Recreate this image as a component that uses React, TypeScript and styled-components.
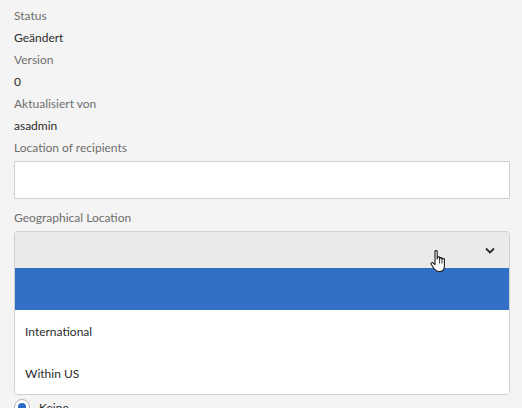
import React from "react";
import styled, { createGlobalStyle } from "styled-components";

const Global = createGlobalStyle`
  html, body { margin: 0; padding: 0; background: #f4f4f4; }
  body { font-family: Lato, "Open Sans", sans-serif; overflow: hidden; }
`;

const Page = styled.div`
  position: relative;
  width: 522px;
  height: 408px;
  overflow: hidden;
  padding: 5px 12px 0 14px;
  box-sizing: border-box;
`;

const Label = styled.div`
  font-size: 12px;
  line-height: 22px;
  color: #6e6e6e;
`;

const Value = styled.div`
  font-size: 12px;
  line-height: 22px;
  color: #2c2c2c;
`;

const FieldLabel = styled(Label)<{ $top?: number }>`
  margin-top: ${(p) => p.$top ?? 0}px;
  margin-bottom: 2px;
`;

const TextInput = styled.div`
  height: 38px;
  box-sizing: border-box;
  background: #fff;
  border: 1px solid #d0d0d0;
`;

const Select = styled.div`
  margin-top: 1px;
  border: 1px solid #d0d0d0;
  border-radius: 4px;
  background: #fff;
  overflow: hidden;
`;

const SelectButton = styled.div`
  height: 36px;
  background: #eaeaea;
  display: flex;
  align-items: center;
  justify-content: flex-end;
  padding-right: 14px;
`;

const Option = styled.div<{ $active?: boolean }>`
  height: 42px;
  display: flex;
  align-items: center;
  padding-left: 10px;
  font-size: 12px;
  color: #2c2c2c;
  background: ${(p) => (p.$active ? "#3270c6" : "#fff")};
`;

const RadioRow = styled.div`
  margin-top: 4px;
  display: flex;
  align-items: center;
  gap: 9px;
  font-size: 12px;
  color: #2c2c2c;
`;

const Radio = styled.span`
  width: 16px;
  height: 16px;
  box-sizing: border-box;
  border-radius: 50%;
  border: 1px solid #b3b3b3;
  background: #fff;
  display: flex;
  align-items: center;
  justify-content: center;
  &::after {
    content: "";
    width: 8px;
    height: 8px;
    border-radius: 50%;
    background: #2b6bc4;
  }
`;

const Cursor = styled.svg`
  position: absolute;
  left: 430px;
  top: 249px;
`;

export default function App() {
  return (
    <>
      <Global />
      <Page>
        <Label>Status</Label>
        <Value>Geändert</Value>
        <Label>Version</Label>
        <Value>0</Value>
        <Label>Aktualisiert von</Label>
        <Value>asadmin</Value>
        <FieldLabel>Location of recipients</FieldLabel>
        <TextInput />
        <FieldLabel $top={8}>Geographical Location</FieldLabel>
        <Select>
          <SelectButton>
            <svg width="10" height="7" viewBox="0 0 10 7">
              <path d="M1 1.5 L5 5.5 L9 1.5" fill="none" stroke="#2c2c2c" strokeWidth="1.8" />
            </svg>
          </SelectButton>
          <Option $active />
          <Option>International</Option>
          <Option>Within US</Option>
        </Select>
        <RadioRow>
          <Radio />
          <span>Keine</span>
        </RadioRow>
        <Cursor width="20" height="26" viewBox="0 0 20 26">
          <path
            d="M5 2.2 C5 1.2 7.2 1.2 7.2 2.2 L7.2 10 L7.4 8.6 C7.4 7.6 9.6 7.6 9.6 8.6 L9.6 10.5 L9.8 9.4 C9.8 8.4 12 8.4 12 9.4 L12 11 L12.2 10.2 C12.2 9.2 14.4 9.2 14.4 10.2 L14.4 16.5 C14.4 20 12.6 22.5 10 22.5 L8.4 22.5 C6.4 22.5 5.4 21.5 4.2 19.8 L1.2 15.2 C0.6 14.2 2 13 3 13.8 L5 15.6 Z"
            fill="#fff"
            stroke="#1a1a1a"
            strokeWidth="1.1"
            strokeLinejoin="round"
          />
          <path d="M9.6 11 V14.5 M12 11.5 V14.5" stroke="#1a1a1a" strokeWidth="0.9" />
        </Cursor>
      </Page>
    </>
  );
}
